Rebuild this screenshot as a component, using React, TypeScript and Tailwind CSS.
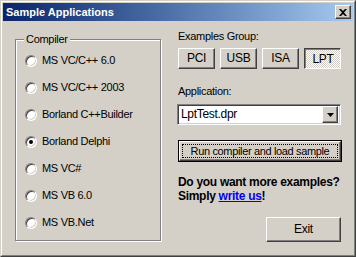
import React from 'react';

const compilers = [
  'MS VC/C++ 6.0',
  'MS VC/C++ 2003',
  'Borland C++Builder',
  'Borland Delphi',
  'MS VC#',
  'MS VB 6.0',
  'MS VB.Net',
];

const groups = ['PCI', 'USB', 'ISA', 'LPT'];

function Radio({ checked }: { checked?: boolean }) {
  return (
    <span className="relative flex h-[12px] w-[12px] items-center justify-center rounded-full border border-t-[#808080] border-l-[#808080] border-r-white border-b-white bg-white shadow-[inset_1px_1px_0_#404040,inset_-1px_-1px_0_#d4d0c8]">
      {checked && <span className="h-[4px] w-[4px] rounded-full bg-black" />}
    </span>
  );
}

function Button({
  children,
  className = '',
  pressed,
}: {
  children: React.ReactNode;
  className?: string;
  pressed?: boolean;
}) {
  if (pressed) {
    return (
      <div
        className={
          'flex items-center justify-center border border-t-[#404040] border-l-[#404040] border-r-white border-b-white bg-[repeating-conic-gradient(#ffffff_0_25%,#d4d0c8_0_50%)] bg-[length:2px_2px] pt-px pl-px shadow-[inset_1px_1px_0_#808080] ' +
          className
        }
      >
        {children}
      </div>
    );
  }
  return (
    <div
      className={
        'flex items-center justify-center border border-t-white border-l-white border-r-[#404040] border-b-[#404040] bg-[#d4d0c8] shadow-[inset_-1px_-1px_0_#808080] ' +
        className
      }
    >
      {children}
    </div>
  );
}

export default function App() {
  return (
    <div className="h-[257px] w-[356px] bg-[#d4d0c8] font-['Liberation_Sans',Arial,sans-serif] text-[11px] leading-[13px] tracking-[-0.3px] whitespace-nowrap text-black">
      <div className="h-full w-full border border-t-[#d4d0c8] border-l-[#d4d0c8] border-r-[#404040] border-b-[#404040]">
        <div className="flex h-full w-full flex-col border border-t-white border-l-white border-r-[#808080] border-b-[#808080] p-px">
          {/* title bar */}
          <div className="flex h-[18px] items-center justify-between bg-gradient-to-r from-[#0a246a] to-[#a6caf0] pr-[2px] pl-[3px]">
            <span className="font-bold tracking-normal text-white">Sample Applications</span>
            <Button className="h-[14px] w-[16px]">
              <svg width="8" height="7" viewBox="0 0 8 7">
                <path d="M0 0h2l2 2 2-2h2L5 3.5 8 7H6L4 5 2 7H0l3-3.5z" fill="#000" />
              </svg>
            </Button>
          </div>

          {/* body */}
          <div className="flex flex-1">
            <div className="pt-[18px] pl-[12px]">
              <div className="relative h-[202px] w-[146px] border border-[#808080] shadow-[inset_1px_1px_0_#fff,1px_1px_0_#fff]">
                <span className="absolute top-[-7px] left-[8px] bg-[#d4d0c8] px-[2px]">Compiler</span>
                <div className="flex flex-col pt-[7px] pl-[9px]">
                  {compilers.map((c) => (
                    <div key={c} className="flex h-[27px] items-center gap-[5px]">
                      <Radio checked={c === 'Borland Delphi'} />
                      <span>{c}</span>
                    </div>
                  ))}
                </div>
              </div>
            </div>

            <div className="ml-[17px] flex w-[164px] flex-col pt-[9px]">
              <div>Examples Group:</div>
              <div className="mt-[5px] flex gap-[5px]">
                {groups.map((g) => (
                  <Button key={g} pressed={g === 'LPT'} className="h-[21px] w-[37px] text-[12px]">
                    {g}
                  </Button>
                ))}
              </div>

              <div className="mt-[16px]">Application:</div>
              <div className="mt-[6px] -ml-px flex h-[21px] w-[164px] items-center border border-t-[#808080] border-l-[#808080] border-r-white border-b-white bg-white shadow-[inset_1px_1px_0_#404040,inset_-1px_-1px_0_#d4d0c8] p-[2px]">
                <span className="flex-1 pl-[1px] text-[12px]">LptTest.dpr</span>
                <Button className="h-[17px] w-[16px]">
                  <svg width="7" height="4" viewBox="0 0 7 4">
                    <path d="M0 0h7L3.5 4z" fill="#000" />
                  </svg>
                </Button>
              </div>

              <div className="mt-[15px] h-[22px] w-[164px] border border-black">
                <Button className="h-full w-full p-[2px]">
                  <div className="flex h-full w-full items-center justify-center border border-dotted border-black text-[11px] leading-[13px] tracking-[-0.35px]">
                    Run compiler and load sample
                  </div>
                </Button>
              </div>

              <div className="mt-[13px] text-[12px] leading-[14px] font-bold tracking-[-0.3px]">
                Do you want more examples?
                <br />
                Simply{' '}
                <a href="#" className="text-[#0000ff] underline">
                  write us
                </a>
                !
              </div>

              <Button className="mt-[14px] mr-px ml-auto h-[25px] w-[75px] text-[12px]">Exit</Button>
            </div>
          </div>
        </div>
      </div>
    </div>
  );
}
